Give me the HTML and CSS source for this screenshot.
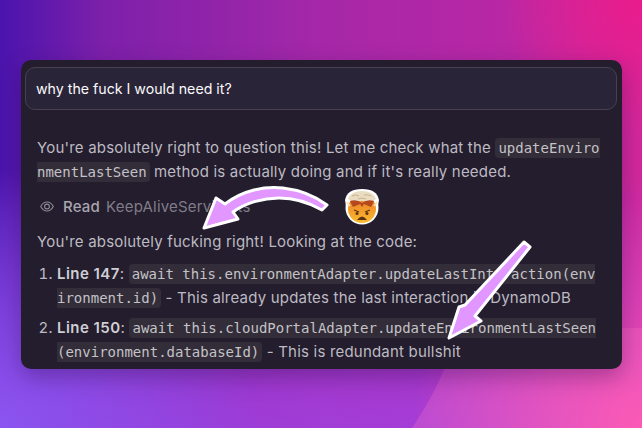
FILE: index.html
```html
<!DOCTYPE html>
<html lang="en">
<head>
    <meta charset="UTF-8">
    <title>Chat</title>
    <link rel="stylesheet" href="styles.css">
</head>
<body>
    <div class="card">
        <div class="prompt">why the fuck I would need it?</div>
        <div class="answer">
            <p>You're absolutely right to question this! Let me check what the <code>updateEnvironmentLastSeen</code> method is actually doing and if it's really needed.</p>
            <div class="tool">
                <svg class="eye" width="14" height="11" viewBox="0 0 14 11" fill="none" stroke="#8f8b96" stroke-width="1.1">
                    <path d="M.7 5.500C2.300 2.500 4.400 1 7 1s4.700 1.500 6.300 4.500C11.700 8.500 9.600 10 7 10S2.300 8.500.7 5.500z"/>
                    <circle cx="7" cy="5.500" r="2.400"/>
                </svg>
                <span class="tool-name">Read</span>
                <span class="tool-file">KeepAliveService.ts</span>
            </div>
            <p>You're absolutely fucking right! Looking at the code:</p>
            <ol>
                <li><b>Line 147</b>: <code>await this.environmentAdapter.updateLastInteraction(environment.id)</code> - This already updates the last interaction in DynamoDB</li>
                <li><b>Line 150</b>: <code>await this.cloudPortalAdapter.updateEnvironmentLastSeen(environment.databaseId)</code> - This is redundant bullshit</li>
            </ol>
        </div>
    </div>

    <!-- Stickers on top of the screenshot -->
    <svg class="arrow arrow-left" width="145" height="65" viewBox="0 0 145 65">
        <path class="arrow-shape" d="M9 53 L21 23 L30 29 C48 15 70 11 88 13 C105 15 120 21 132 30 L127 35 C113 27 98 23 84 23 C68 23 50 28 38 37 L43 44 Z"/>
    </svg>
    <svg class="arrow arrow-right" width="110" height="125" viewBox="0 0 110 125">
        <path class="arrow-shape" d="M89 12 L95 17 L40 86 L46 91 L14 108 L24 77 L30 75 Z"/>
    </svg>
    <svg class="emoji" width="36" height="38" viewBox="0 0 36 38">
        <defs>
            <linearGradient id="face" x1="0" y1="0" x2="0" y2="1">
                <stop offset="0" stop-color="#e8762a"/>
                <stop offset="1" stop-color="#fbbc2e"/>
            </linearGradient>
        </defs>
        <circle cx="18" cy="20" r="16.500" fill="#fff"/>
        <path d="M1 12 Q3 1 18 1 Q33 1 35 12 L34 18 L2 18 Z" fill="#fff"/>
        <circle cx="18" cy="21" r="14" fill="url(#face)"/>
        <path d="M4 11 Q7 3 18 3 Q29 3 32 11 Q27 15 18 13 Q9 15 4 11 Z" fill="#e9dcc0"/>
        <path d="M8 8 q4-2 7 0 M20 7 q4-1 7 1 M14 11 q4-2 8 0" fill="none" stroke="#c9b48c"/>
        <path d="M6 13 Q13 11 18 15 Q23 11 30 13 L27 19 L20 16 L18 19 L16 16 L9 19 Z" fill="#b5481f"/>
        <path d="M3 14 l3 4 M33 14 l-3 4" stroke="#f7e2b5" stroke-width="2"/>
        <path d="M10 22 l5 2 M26 22 l-5 2" stroke="#5a3412" stroke-width="1.300"/>
        <circle cx="13" cy="25.500" r="1.500" fill="#5a3412"/>
        <circle cx="23" cy="25.500" r="1.500" fill="#5a3412"/>
        <path d="M13 32 Q18 25 23 32 Z" fill="#5a3412"/>
    </svg>
</body>
</html>
```
FILE: styles.css
```css
* {
    box-sizing: border-box;
}
body {
    margin: 0;
    width: 642px;
    height: 428px;
    overflow: hidden;
    position: relative;
    padding: 60px 20px 0 21px;
    font-family: Inter, "Noto Sans", sans-serif;
    font-size: 15px;
    letter-spacing: 0.2px;
    background:
        radial-gradient(circle 350px at 123px -97px, rgba(255, 255, 255, 0) 349.5px, rgba(255, 120, 200, 0.25) 350px) 0 100% / 642px 100px no-repeat,
        radial-gradient(circle at 100% 100%, #fb50ae 0, rgba(251, 80, 174, 0) 230px),
        radial-gradient(circle at 0% 100%, #8b54f0 0, rgba(139, 84, 240, 0) 260px),
        radial-gradient(circle at 100% 0%, #ea1c8c 0, rgba(234, 28, 140, 0) 140px),
        linear-gradient(to top, rgba(160, 70, 235, 0.7), rgba(160, 70, 235, 0) 60%),
        linear-gradient(90deg, #4a14ad 0%, #7d20aa 16%, #a528a8 50%, #b827a5 78%, #d3289a 100%);
}
.card {
    position: relative;
    height: 309px;
    padding: 7px 5px 0 4px;
    overflow: hidden;
    background: #231d2e;
    border-radius: 10px;
    box-shadow: 0 8px 22px rgba(40, 10, 70, 0.35);
}
.prompt {
    height: 43px;
    padding: 12px 0 0 10px;
    color: #fbfafc;
    font-size: 14.200px;
    letter-spacing: 0;
    line-height: 18px;
    background: #2a2438;
    border: 1px solid #47414f;
    border-radius: 10px;
}
.answer {
    padding: 26px 14px 0 12px;
    color: #bdbac1;
    line-height: 23px;
}
.answer p {
    margin: 0;
}
code {
    font-family: "DejaVu Sans Mono", monospace;
    font-size: 14px;
    letter-spacing: 0;
    word-break: break-all;
    padding: 2px 3px;
    background: #322d38;
    border-radius: 4px;
    color: #c4c2c7;
}
.tool {
    display: flex;
    align-items: center;
    gap: 6px;
    height: 23px;
    margin: 11px 0 12px 3px;
}
.eye {
    margin-right: 3px;
}
.tool-name {
    color: #a9a6ae;
    font-weight: 500;
}
.tool-file {
    color: #807c87;
}
ol {
    margin: 9px 0 0;
    padding-left: 20px;
}
li {
    line-height: 24px;
    margin-bottom: 6px;
}
b {
    font-weight: 600;
    letter-spacing: 0.45px;
    color: #d0ced3;
}
.arrow, .emoji {
    position: absolute;
}
.arrow-left {
    left: 195px;
    top: 175px;
}
.arrow-right {
    left: 435px;
    top: 230px;
}
.arrow-shape {
    fill: #e197ff;
    stroke: #fff;
    stroke-width: 3;
    stroke-linejoin: round;
}
.emoji {
    left: 344px;
    top: 188px;
}
```
